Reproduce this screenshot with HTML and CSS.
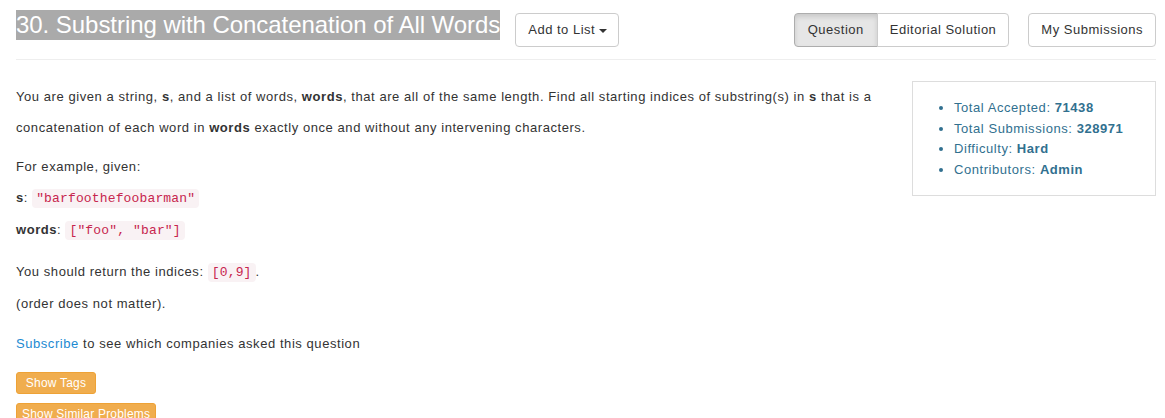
FILE: index.html
```html
<!DOCTYPE html>
<html>
<head>
<meta charset="utf-8">
<link rel="stylesheet" href="styles.css">
</head>
<body>
<div class="page">
  <div class="header">
    <h3 class="title"><span class="title-sel">30. Substring with Concatenation of All Words</span></h3>
    <button class="btn btn-add">Add to List <span class="caret"></span></button>
    <div class="spacer"></div>
    <div class="btn-group">
      <button class="btn active">Question</button>
      <button class="btn">Editorial Solution</button>
    </div>
    <button class="btn btn-subs">My Submissions</button>
  </div>
  <div class="content">
    <div class="main">
      <p>You are given a string, <b>s</b>, and a list of words, <b>words</b>, that are all of the same length. Find all starting indices of substring(s) in <b>s</b> that is a concatenation of each word in <b>words</b> exactly once and without any intervening characters.</p>
      <p class="tight">For example, given:<br><b>s</b>: <code>"barfoothefoobarman"</code><br><b>words</b>: <code>["foo", "bar"]</code></p>
      <p class="ret">You should return the indices: <code>[0,9]</code>.<br>(order does not matter).</p>
      <p class="subscribe"><a href="#">Subscribe</a> to see which companies asked this question</p>
      <div class="actions">
        <button class="btn-warn btn-tags">Show Tags</button>
        <button class="btn-warn">Show Similar Problems</button>
      </div>
    </div>
    <div class="side">
      <ul>
        <li>Total Accepted: <b>71438</b></li>
        <li>Total Submissions: <b>328971</b></li>
        <li>Difficulty: <b>Hard</b></li>
        <li>Contributors: <b>Admin</b></li>
      </ul>
    </div>
  </div>
</div>
</body>
</html>
```
FILE: styles.css
```css
html, body {
  margin: 0;
  padding: 0;
  background: #fff;
}
body {
  font-family: "Liberation Sans", Arial, sans-serif;
  font-size: 13px;
  color: #333;
  letter-spacing: 0.56px;
}
.page {
  padding: 0 9px 0 16px;
}
.header {
  display: flex;
  align-items: center;
  padding: 13px 0 12px;
  border-bottom: 1px solid #eee;
}
.title {
  margin: 0;
  font-size: 24px;
  font-weight: normal;
  letter-spacing: -0.05px;
  line-height: 30px;
  height: 34px;
  display: flex;
  align-items: flex-start;
}
.title-sel {
  background: #aaaaaa;
  color: #fff;
  display: inline-block;
  line-height: 30px;
  margin-top: -3px;
}
.btn {
  font-family: "Liberation Sans", Arial, sans-serif;
  font-size: 13px;
  letter-spacing: 0.5px;
  line-height: 20px;
  padding: 6px 12px;
  color: #333;
  background: #fff;
  border: 1px solid #ccc;
  border-radius: 4px;
  cursor: pointer;
  margin: 0;
}
.btn-add {
  margin-left: 15px;
  padding: 6px 11px 6px 12px;
}
.caret {
  display: inline-block;
  width: 0;
  height: 0;
  margin-left: 0;
  vertical-align: middle;
  border-top: 4px solid #333;
  border-left: 4px solid transparent;
  border-right: 4px solid transparent;
}
.spacer {
  flex: 1;
}
.btn-group {
  display: flex;
}
.btn-group .btn:first-child {
  border-top-right-radius: 0;
  border-bottom-right-radius: 0;
}
.btn-group .btn:last-child {
  border-top-left-radius: 0;
  border-bottom-left-radius: 0;
  margin-left: -1px;
}
.btn.active {
  background: #e6e6e6;
  border-color: #adadad;
  box-shadow: inset 0 3px 5px rgba(0,0,0,0.125);
  padding: 6px 13px;
}
.btn-subs {
  margin-left: 19px;
}
.content {
  display: grid;
  grid-template-columns: 1fr 244px;
  column-gap: 32px;
  padding-top: 21px;
  align-items: start;
}
.main p {
  margin: 0 0 10px;
  line-height: 31px;
}
.main p:first-child {
  margin-bottom: 8px;
}
.main p.ret {
  margin-bottom: 9px;
}
.main b {
  font-weight: bold;
  color: #333;
}
code {
  font-family: "Liberation Mono", "Courier New", monospace;
  font-size: 13px;
  letter-spacing: 0.15px;
  color: #c7254e;
  background: #f9f2f4;
  padding: 2px 4px;
  border-radius: 4px;
}
a {
  color: #1c8ad2;
  text-decoration: none;
}
.actions {
  display: flex;
  flex-direction: column;
  align-items: flex-start;
  gap: 9px;
  margin-top: 13px;
}
.btn-warn {
  font-family: "Liberation Sans", Arial, sans-serif;
  font-size: 12px;
  letter-spacing: 0.2px;
  line-height: 18px;
  padding: 1px 5px;
  color: #fff;
  background: #f0ad4e;
  border: 1px solid #eea236;
  border-radius: 3px;
  margin: 0;
}
.btn-tags {
  min-width: 80px;
}
.side {
  border: 1px solid #ddd;
  padding: 16px 15px 14px;
  color: #31708f;
}
.side ul {
  margin: 0;
  padding-left: 26px;
}
.side li {
  line-height: 20.7px;
}
```
